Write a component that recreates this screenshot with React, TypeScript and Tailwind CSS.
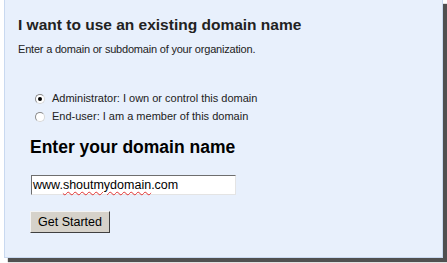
import React from "react";

const Radio = ({ checked }: { checked?: boolean }) => (
  <span className="flex h-[10px] w-[10px] items-center justify-center rounded-full border border-[#8a8a8a] border-b-[#d8d8d8] border-r-[#d8d8d8] bg-white">
    {checked ? <span className="h-[4px] w-[4px] rounded-full bg-black" /> : null}
  </span>
);

export default function App() {
  return (
    <div className="h-[263px] w-[447px] overflow-hidden bg-white font-['Liberation_Sans',Arial,sans-serif] text-[#222]">
      <div className="ml-[4px] h-[258px] w-[439px] border-x border-b border-[#c9d9f0] bg-[#e8f0fc] pl-[13px] pt-[16px] shadow-[4px_4px_1px_#505050]">
        <h1 className="text-[15.5px] font-bold leading-[18px]">I want to use an existing domain name</h1>
        <p className="mt-[9px] text-[11px] leading-[13px] tracking-[-0.2px]">
          Enter a domain or subdomain of your organization.
        </p>

        <div className="ml-[17px] mt-[36px] flex flex-col gap-[5px] text-[11px] leading-[13px]">
          <label className="flex items-center gap-[7px]">
            <Radio checked />
            <span>Administrator: I own or control this domain</span>
          </label>
          <label className="flex items-center gap-[7px]">
            <Radio />
            <span>End-user: I am a member of this domain</span>
          </label>
        </div>

        <h2 className="ml-[12px] mt-[14px] text-[17.5px] font-bold leading-[20px] text-black">
          Enter your domain name
        </h2>

        <div className="ml-[13px] mt-[18px] flex h-[20px] w-[205px] items-center border border-[#6e6e6e] border-b-[#e4e4e4] border-r-[#e4e4e4] bg-white pl-[1px] text-[12.5px] leading-[16px] text-black">
          <span>www.</span>
          <span className="underline decoration-[#e03030] decoration-wavy decoration-1 underline-offset-2">
            shoutmydomain
          </span>
          <span>.com</span>
        </div>

        <button
          type="button"
          className="ml-[12px] mt-[16px] flex h-[22px] w-[80px] items-center justify-center border border-[#f4f4f4] border-b-[#404040] border-r-[#404040] bg-[#d6d2ca] text-[12.5px] text-black"
        >
          Get Started
        </button>
      </div>
    </div>
  );
}
